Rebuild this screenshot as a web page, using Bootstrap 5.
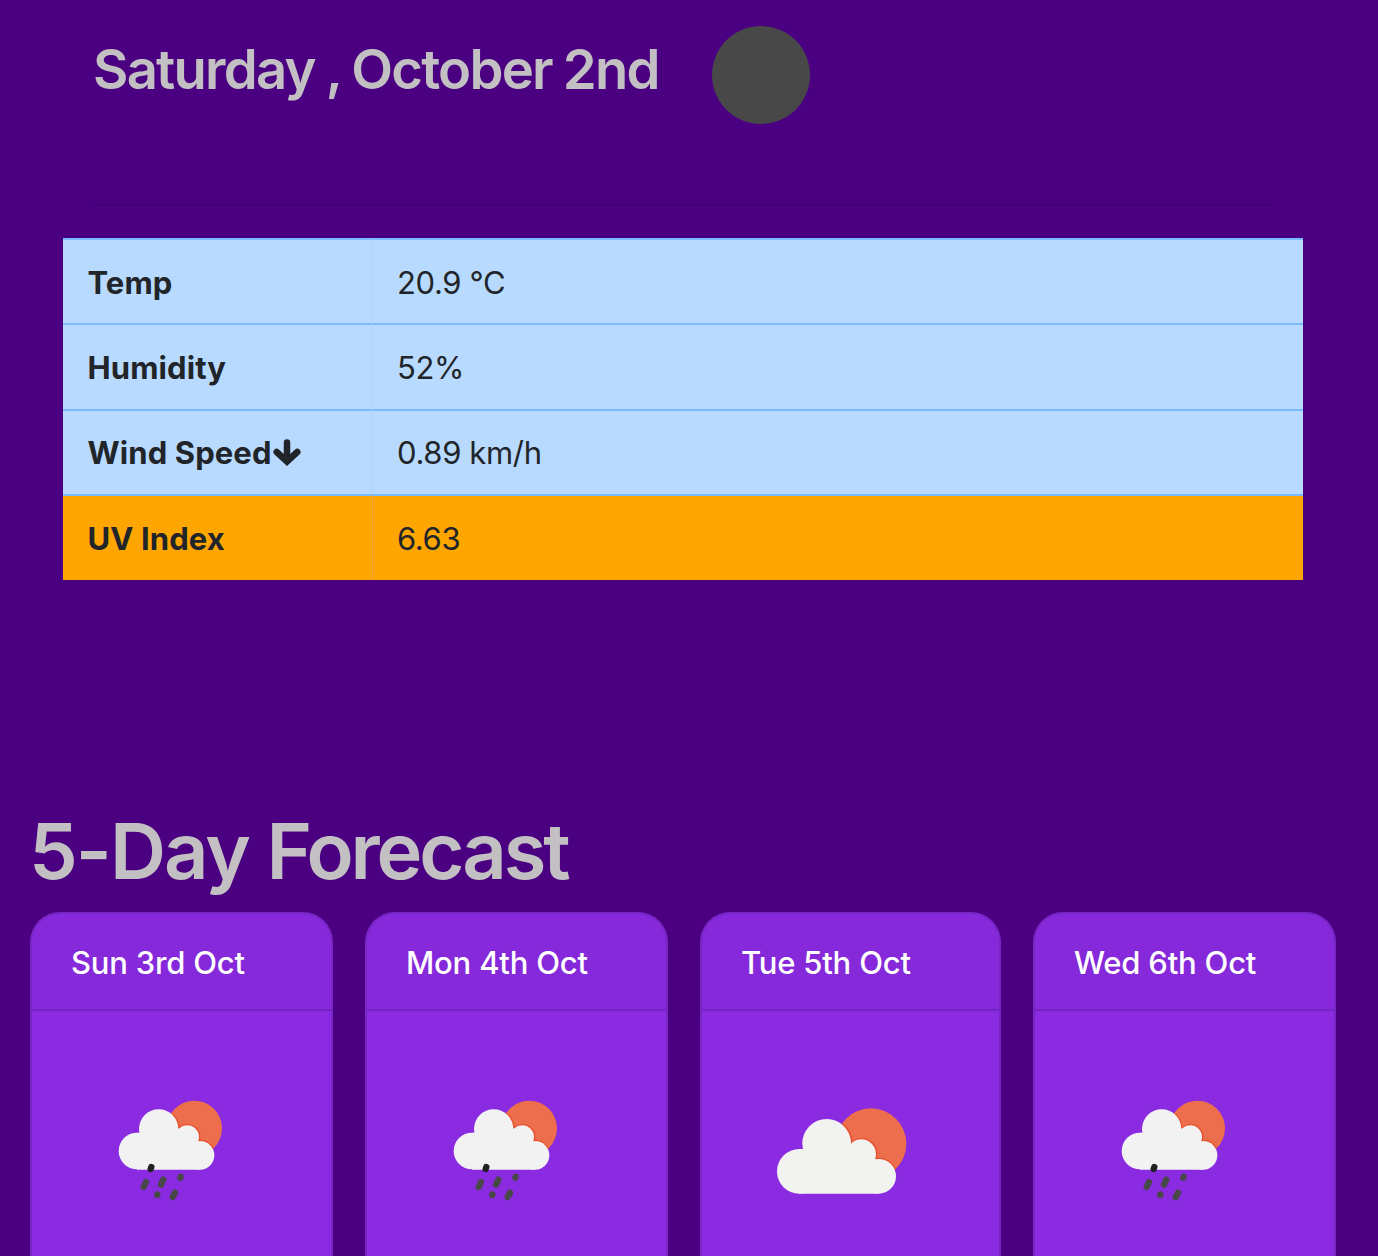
<!DOCTYPE html>
<html lang="en">
<head>
<meta charset="utf-8">
<meta name="viewport" content="width=device-width, initial-scale=1">
<title>Weather Dashboard</title>
<link href="https://cdn.jsdelivr.net/npm/bootstrap@5.3.0/dist/css/bootstrap.min.css" rel="stylesheet">
<style>
  body { background: #4b0082; font-family: Inter, "Liberation Sans", sans-serif; font-size: 31px; line-height: 48px; color: #212529; height: 1256px; overflow: hidden; }
  .today { height: 206px; margin: 0 106px 0 93px; border-bottom: 2px solid rgba(0,0,0,.1); }
  .today-title { font-size: 54.4px; line-height: 68px; font-weight: 560; color: #c2c0c2; margin: 34.5px 0 0; letter-spacing: -1.75px; word-spacing: -1px; white-space: pre; width: 618.5px; }
  .sky-disc { width: 98px; height: 98px; margin-top: 26px; background: #484848; }
  .readings { width: 1240px; margin: 32px 0 0 63px; table-layout: fixed; border-collapse: separate; border-spacing: 0; }
  .readings > tbody > tr > * { height: 85.4px; padding: 2px 24px 0; background: #b8daff; border: 0; border-top: 2px solid #7abaff; vertical-align: middle; box-shadow: none; color: #212529; letter-spacing: -.35px; }
  .readings > tbody > tr > th { width: 310px; padding-left: 24.5px; border-right: 1px solid #b0cffa; font-weight: 700; letter-spacing: .1px; }
  .readings > tbody > tr.uv-high > * { background: orange; padding-top: 3px; }
  .readings > tbody > tr.uv-high > th { border-right-color: #eaa238; }
  .arrow-icon { width: 28px; height: 28px; margin-left: 1px; vertical-align: -3px; }
  .forecast { margin: 223px 0 0 30px; }
  .forecast-title { font-size: 77.6px; line-height: 96px; font-weight: 560; color: #c2c0c2; letter-spacing: -2px; margin: 0 0 0 -1px; }
  .forecast-title span { letter-spacing: -3.1px; }
  .days { gap: 32px; margin-top: 13px; }
  .day { flex: 0 0 303px; height: 345px; background: #8a2be2; border: 2px solid rgba(0,0,0,.125); border-bottom: 0; border-radius: 30px 30px 0 0; }
  .day:nth-child(3) { flex-basis: 301px; }
  .day .card-header { height: 97px; padding: 25px 39px 0; background: rgba(0,0,0,.03); border-bottom: 2px solid rgba(0,0,0,.125); border-radius: 28px 28px 0 0; color: #fff; letter-spacing: -.2px; font-weight: 450; white-space: nowrap; }
  .sky-icon { display: block; width: 150px; height: 140px; margin: 69px 0 0 68px; }
  .sky-icon.cloudy { width: 170px; margin-left: 58px; }
</style>
<script src="https://cdn.jsdelivr.net/npm/bootstrap@5.3.0/dist/js/bootstrap.bundle.min.js"></script>
</head>
<body>
<svg width="0" height="0" class="position-absolute" aria-hidden="true">
  <clipPath id="rain-sun"><circle cx="283" cy="145" r="83"/></clipPath>
  <clipPath id="cloud-sun"><circle cx="333" cy="191" r="106"/></clipPath>
  <symbol id="rain" viewBox="0 0 450 420">
    <circle cx="283" cy="145" r="83" fill="#ec6e4c"/>
    <g fill="#e8502b" clip-path="url(#rain-sun)"><circle cx="178" cy="147" r="61"/><circle cx="263" cy="170" r="38"/><circle cx="300" cy="225" r="46"/></g>
    <g fill="#f2f2f2"><circle cx="111" cy="213" r="55"/><circle cx="176" cy="147" r="59"/><circle cx="262" cy="171" r="35"/><circle cx="300" cy="226" r="43"/><path d="M111 158h70l80-18 39 60v69H111z"/></g>
    <g stroke="#484848" stroke-width="19" stroke-linecap="round"><path d="M138 306l-7 15M190 299l-7 15M242 290l-1 3M172 343v2M225 338l-7 13"/><path stroke="#222" d="M154 261l-2 6"/></g>
  </symbol>
  <symbol id="cloud" viewBox="0 0 510 420">
    <circle cx="333" cy="191" r="106" fill="#ec6e4c"/>
    <g fill="#e8502b" clip-path="url(#cloud-sun)"><circle cx="203" cy="190" r="75"/><circle cx="305" cy="221" r="47"/><circle cx="356" cy="288" r="55"/></g>
    <g fill="#f2f2f0"><circle cx="118" cy="274" r="67"/><circle cx="200" cy="190" r="73"/><circle cx="304" cy="222" r="44"/><circle cx="356" cy="289" r="52"/><path d="M118 207h84l100-18 54 60v92H118z"/></g>
  </symbol>
</svg>

<header class="today d-flex align-items-start">
  <h2 class="today-title">Saturday , October 2nd</h2>
  <div class="sky-disc rounded-circle"></div>
</header>

<table class="readings table">
  <tbody>
    <tr><th scope="row">Temp</th><td>20.9 °C</td></tr>
    <tr><th scope="row">Humidity</th><td>52%</td></tr>
    <tr><th scope="row">Wind Speed<svg class="arrow-icon" viewBox="0 0 28 28" fill="none" stroke="#212529" stroke-width="6.500" stroke-linecap="round" stroke-linejoin="miter"><path d="M14 3.500v17M3.700 13L14 22.500l10.300-9.500"/></svg></th><td>0.89 km/h</td></tr>
    <tr class="uv-high"><th scope="row">UV Index</th><td>6.63</td></tr>
  </tbody>
</table>

<section class="forecast">
  <h1 class="forecast-title">5-Day <span>Forecast</span></h1>
  <div class="days d-flex">
    <div class="card day"><div class="card-header">Sun 3rd Oct</div><svg class="sky-icon"><use href="#rain"/></svg></div>
    <div class="card day"><div class="card-header">Mon 4th Oct</div><svg class="sky-icon"><use href="#rain"/></svg></div>
    <div class="card day"><div class="card-header">Tue 5th Oct</div><svg class="sky-icon cloudy"><use href="#cloud"/></svg></div>
    <div class="card day"><div class="card-header">Wed 6th Oct</div><svg class="sky-icon"><use href="#rain"/></svg></div>
  </div>
</section>
</body>
</html>
